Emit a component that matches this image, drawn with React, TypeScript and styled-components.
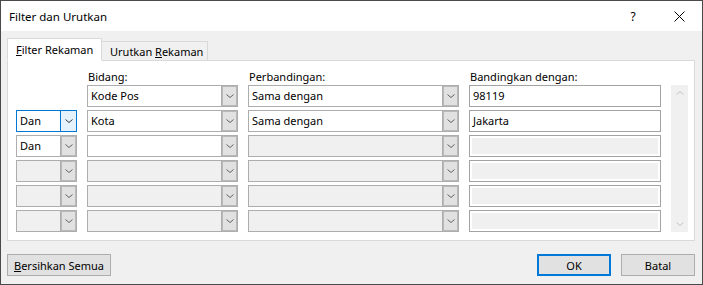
import React from "react";
import styled, { createGlobalStyle, css } from "styled-components";

const Global = createGlobalStyle`
  html, body { margin: 0; padding: 0; background: #f0f0f0; }
  body { font-family: "Noto Sans", "Open Sans", sans-serif; font-size: 11px; color: #000; }
  * { box-sizing: border-box; }
`;

const Window = styled.div`
  width: 703px;
  height: 285px;
  border: 1px solid #4a4a4a;
  display: flex;
  flex-direction: column;
  background: #f0f0f0;
`;

const TitleBar = styled.div`
  height: 30px;
  background: #fff;
  display: flex;
  align-items: center;
  padding-left: 8px;
  flex-shrink: 0;
`;

const Title = styled.div`
  flex: 1;
  font-size: 11.5px;
`;

const TitleButton = styled.div`
  width: 46px;
  height: 30px;
  display: flex;
  align-items: center;
  justify-content: center;
  font-size: 12px;
  color: #000;
`;

const Body = styled.div`
  flex: 1;
  display: flex;
  flex-direction: column;
  padding: 7px 7px 8px 6px;
`;

const TabRow = styled.div`
  display: flex;
  align-items: flex-end;
  height: 22px;
  position: relative;
  z-index: 1;
`;

const Tab = styled.div<{ $active?: boolean }>`
  display: flex;
  align-items: center;
  white-space: nowrap;
  border: 1px solid #d9d9d9;
  ${(p) =>
    p.$active
      ? css`
          height: 23px;
          margin-bottom: -1px;
          background: #fff;
          border-bottom-color: #fff;
          padding: 0 0 1px 8px;
          width: 95px;
        `
      : css`
          height: 19px;
          background: #f0f0f0;
          border-left: none;
          border-bottom: none;
          padding: 0 0 0 8px;
          width: 106px;
        `}
`;

const Panel = styled.div`
  height: 181px;
  background: #fff;
  border: 1px solid #d9d9d9;
  padding: 2px 0 0 8px;
  display: grid;
  grid-template-columns: 61px 151px 211px 192px 17px;
  grid-template-rows: 19px repeat(6, 22px);
  column-gap: 10px;
  row-gap: 3px;
`;

const Label = styled.div`
  align-self: end;
  line-height: 16px;
  margin-bottom: -3px;
  padding-left: 1px;
  white-space: nowrap;
`;

type State = "enabled" | "focused" | "disabled";

const Combo = styled.div<{ $state: State }>`
  display: flex;
  height: 22px;
  border: 1px solid ${(p) => (p.$state === "focused" ? "#0078d7" : "#adadad")};
  background: ${(p) => (p.$state === "disabled" ? "#f0f0f0" : "#fff")};
`;

const ComboText = styled.div`
  flex: 1;
  padding-left: 3px;
  line-height: 20px;
  white-space: nowrap;
  overflow: hidden;
`;

const ComboButton = styled.div<{ $state: State }>`
  width: 17px;
  margin: -1px -1px -1px 0;
  display: flex;
  align-items: center;
  justify-content: center;
  ${(p) =>
    p.$state === "focused"
      ? css`
          background: #e5f1fb;
          border: 1px solid #0078d7;
        `
      : css`
          background: #e1e1e1;
          border: 1px solid #adadad;
          box-shadow: inset 0 0 0 1px #b9b9b9;
        `}
`;

const TextBox = styled.div<{ $disabled?: boolean }>`
  height: 22px;
  border: 1px solid #a3a3a3;
  padding-left: 3px;
  line-height: 20px;
  background: ${(p) => (p.$disabled ? "#f0f0f0" : "#fff")};
  box-shadow: ${(p) => (p.$disabled ? "inset 0 0 0 2px #fff" : "none")};
`;

const Scrollbar = styled.div`
  grid-column: 5;
  grid-row: 2 / 8;
  background: #f0f0f0;
  display: flex;
  flex-direction: column;
  justify-content: space-between;
  align-items: center;
  padding: 6px 0;
`;

const Footer = styled.div`
  margin-top: 13px;
  display: flex;
  align-items: center;
  gap: 10px;
`;

const Spacer = styled.div`
  flex: 1;
`;

const Button = styled.div<{ $primary?: boolean; $width: number }>`
  width: ${(p) => p.$width}px;
  height: 22px;
  background: #e1e1e1;
  border: ${(p) => (p.$primary ? "2px solid #0078d7" : "1px solid #adadad")};
  display: flex;
  align-items: center;
  justify-content: center;
  white-space: nowrap;
`;

const Chevron = ({ up, color = "#606060" }: { up?: boolean; color?: string }) => (
  <svg width="8" height="4" viewBox="0 0 8 4">
    <polyline
      points={up ? "0.5,3.5 4,0.5 7.5,3.5" : "0.5,0.5 4,3.5 7.5,0.5"}
      fill="none"
      stroke={color}
      strokeWidth="1"
    />
  </svg>
);

const ComboBox = ({ text, state }: { text?: string; state: State }) => (
  <Combo $state={state}>
    <ComboText>{text}</ComboText>
    <ComboButton $state={state}>
      <Chevron color={state === "focused" ? "#333" : "#606060"} />
    </ComboButton>
  </Combo>
);

type Row = {
  op?: { text?: string; state: State } | null;
  field: { text?: string; state: State };
  cmp: { text?: string; state: State };
  value: { text?: string; disabled?: boolean };
};

const rows: Row[] = [
  { op: null, field: { text: "Kode Pos", state: "enabled" }, cmp: { text: "Sama dengan", state: "enabled" }, value: { text: "98119" } },
  { op: { text: "Dan", state: "focused" }, field: { text: "Kota", state: "enabled" }, cmp: { text: "Sama dengan", state: "enabled" }, value: { text: "Jakarta" } },
  { op: { text: "Dan", state: "enabled" }, field: { state: "enabled" }, cmp: { state: "disabled" }, value: { disabled: true } },
  { op: { state: "disabled" }, field: { state: "disabled" }, cmp: { state: "disabled" }, value: { disabled: true } },
  { op: { state: "disabled" }, field: { state: "disabled" }, cmp: { state: "disabled" }, value: { disabled: true } },
  { op: { state: "disabled" }, field: { state: "disabled" }, cmp: { state: "disabled" }, value: { disabled: true } },
];

export default function App() {
  return (
    <>
      <Global />
      <Window>
        <TitleBar>
          <Title>Filter dan Urutkan</Title>
          <TitleButton>?</TitleButton>
          <TitleButton>
            <svg width="11" height="11" viewBox="0 0 11 11">
              <path d="M0.5 0.5 L10.5 10.5 M10.5 0.5 L0.5 10.5" stroke="#000" strokeWidth="1" />
            </svg>
          </TitleButton>
        </TitleBar>
        <Body>
          <TabRow>
            <Tab $active>
              <span>
                <u>F</u>ilter Rekaman
              </span>
            </Tab>
            <Tab>
              <span>
                Urutkan <u>R</u>ekaman
              </span>
            </Tab>
          </TabRow>
          <Panel>
            <div />
            <Label>Bidang:</Label>
            <Label>Perbandingan:</Label>
            <Label>Bandingkan dengan:</Label>
            <div />
            {rows.map((r, i) => (
              <React.Fragment key={i}>
                {r.op ? <ComboBox text={r.op.text} state={r.op.state} /> : <div />}
                <ComboBox text={r.field.text} state={r.field.state} />
                <ComboBox text={r.cmp.text} state={r.cmp.state} />
                <TextBox $disabled={r.value.disabled}>{r.value.text}</TextBox>
              </React.Fragment>
            ))}
            <Scrollbar>
              <Chevron up color="#c2c2c2" />
              <Chevron color="#c2c2c2" />
            </Scrollbar>
          </Panel>
          <Footer>
            <Button $width={104}>
              <span>
                <u>B</u>ersihkan Semua
              </span>
            </Button>
            <Spacer />
            <Button $primary $width={74}>OK</Button>
            <Button $width={74}>Batal</Button>
          </Footer>
        </Body>
      </Window>
    </>
  );
}
